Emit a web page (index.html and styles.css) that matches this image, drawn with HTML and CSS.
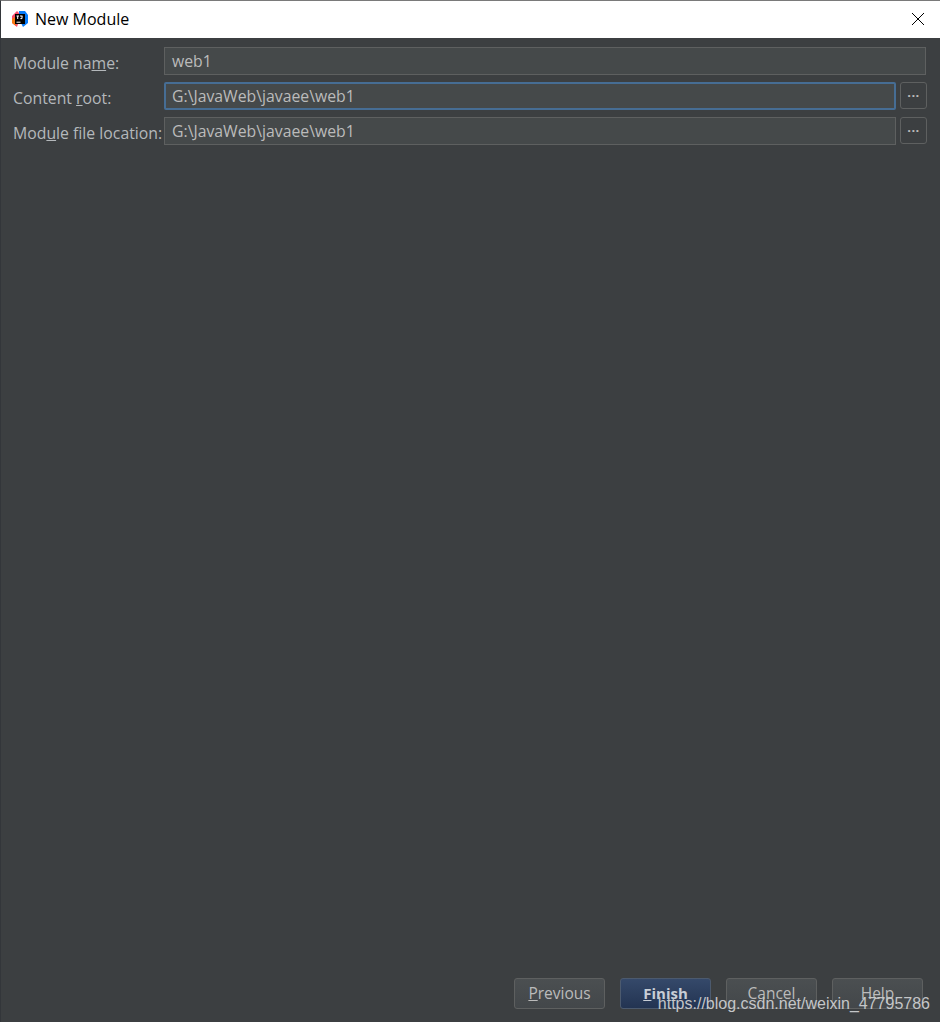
FILE: index.html
```html
<!DOCTYPE html>
<html lang="en">
<head>
  <meta charset="UTF-8">
  <title>New Module</title>
  <link rel="stylesheet" href="styles.css">
</head>
<body>
  <div class="window">
    <div class="titlebar">
      <svg class="app-icon" width="16" height="16" viewBox="0 0 16 16">
        <path d="M0 5 L5 0 L9 4 L5 16 L0 12 Z" fill="#fc4d6a"/>
        <path d="M0 8 L3 6 L4 15 L0 12 Z" fill="#f97a12"/>
        <path d="M7 0 L13 0 L16 4 L16 12 L11 16 L7 8 Z" fill="#087cfa"/>
        <rect x="3" y="3" width="10" height="10" fill="#000"/>
        <path d="M4.5 5 H7 M5.7 5 V8 M8 5 H10.5 M10 5 V7.6 H8.4 M4.5 11.2 H8.5" stroke="#fff" stroke-width="1" fill="none"/>
      </svg>
      <span class="title">New Module</span>
      <svg class="close" width="14" height="14" viewBox="0 0 14 14">
        <path d="M1 1 L13 13 M13 1 L1 13" stroke="#000" stroke-width="1" fill="none"/>
      </svg>
    </div>

    <div class="content">
      <div class="form">
        <label class="label">Module na<u>m</u>e:</label>
        <div class="field wide">web1</div>

        <label class="label">Content <u>r</u>oot:</label>
        <div class="field focused">G:\JavaWeb\javaee\web1</div>
        <button class="browse">...</button>

        <label class="label">Mod<u>u</u>le file location:</label>
        <div class="field">G:\JavaWeb\javaee\web1</div>
        <button class="browse">...</button>
      </div>

      <div class="actions">
        <button class="btn"><u>P</u>revious</button>
        <button class="btn primary"><u>F</u>inish</button>
        <button class="btn">Cancel</button>
        <button class="btn">Help</button>
      </div>
    </div>

    <div class="watermark">https://blog.csdn.net/weixin_47795786</div>
  </div>
</body>
</html>
```

FILE: styles.css
```css
html, body {
  margin: 0;
  height: 100%;
}
body {
  font-family: "Open Sans", "Noto Sans", sans-serif;
  background: #3c3f41;
}
.window {
  position: relative;
  height: 1022px;
  box-sizing: border-box;
  border-top: 1px solid #7a7a7a;
  border-left: 1px solid #33363a;
  display: flex;
  flex-direction: column;
  overflow: hidden;
}
.titlebar {
  height: 37px;
  flex: none;
  box-sizing: border-box;
  padding: 0 15px 2px 11px;
  background: #fff;
  display: flex;
  align-items: center;
}
.app-icon {
  margin-right: 7px;
}
.title {
  font-size: 16px;
  color: #000;
  flex: 1;
}
.content {
  flex: 1;
  display: flex;
  flex-direction: column;
  justify-content: space-between;
  padding: 8px 12px 13px 12px;
  color: #bbb;
}
.form {
  display: grid;
  grid-template-columns: 151px 732px 31px;
  grid-auto-rows: 29px;
  row-gap: 6px;
  align-items: center;
  font-size: 15.8px;
}
.label {
  white-space: nowrap;
  padding-top: 5px;
  color: #b4b8bb;
}
.field {
  box-sizing: border-box;
  height: 28px;
  background: #45494a;
  border: 1px solid #5e6060;
  color: #bbb;
  font-size: 15.8px;
  line-height: 26px;
  padding-left: 7px;
}
.field.wide {
  grid-column: 2 / 4;
  margin-right: 1px;
}
.field.focused {
  border: 2px solid #466d94;
  border-radius: 2px;
  line-height: 24px;
  padding-left: 6px;
}
.browse {
  box-sizing: border-box;
  width: 27px;
  height: 27px;
  margin-left: 4px;
  padding: 0 0 8px;
  background: #3c3f41;
  border: 1px solid #5e6060;
  border-radius: 3px;
  color: #bbb;
  font-family: inherit;
  font-size: 13px;
  font-weight: bold;
  letter-spacing: 0.5px;
}
.actions {
  display: flex;
  justify-content: flex-end;
  gap: 15px;
  margin-right: 5px;
}
.btn {
  box-sizing: border-box;
  width: 91px;
  height: 31px;
  padding: 0 0 2px;
  background: linear-gradient(#4b4f51, #43474a);
  border: 1px solid #5e6060;
  border-radius: 3px;
  color: #bbb;
  font-family: inherit;
  font-size: 15.5px;
}
.btn.primary {
  background: linear-gradient(#35496a, #233452);
  border-color: #4c5a6e;
  color: #c8ced6;
  font-size: 15px;
  font-weight: bold;
}
.watermark {
  position: absolute;
  right: 10px;
  bottom: 9px;
  font-family: "Liberation Sans", Arial, sans-serif;
  font-size: 16px;
  color: #c4c6c8;
}
```
